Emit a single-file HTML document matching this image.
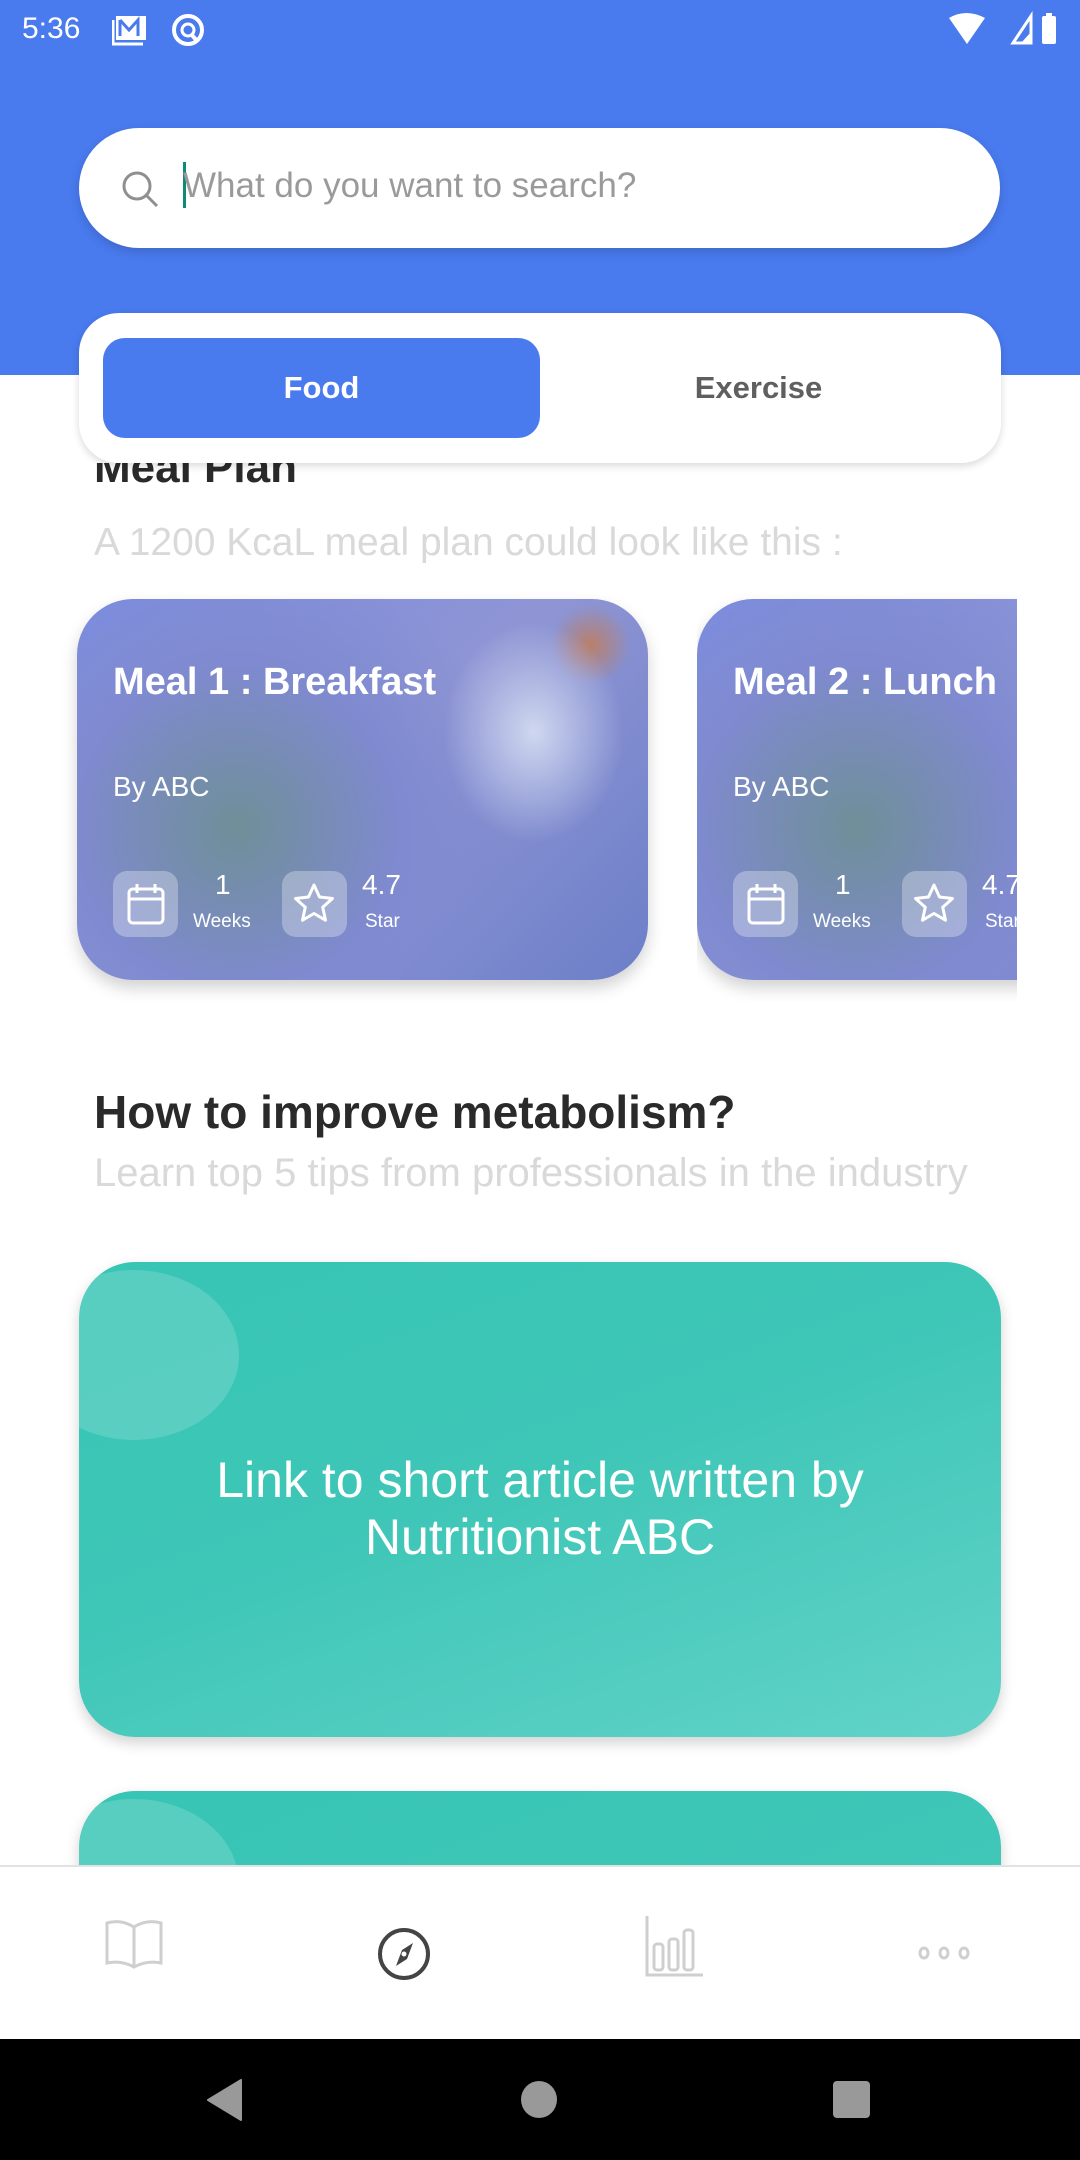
<!DOCTYPE html>
<html><head><meta charset="utf-8"><style>
*{margin:0;padding:0;box-sizing:border-box}
body{width:1080px;height:2160px;position:relative;overflow:hidden;background:#fff;font-family:"Liberation Sans",Roboto,sans-serif}
.abs{position:absolute}
.hdr{left:0;top:0;width:1080px;height:375px;background:#497AEE}
.status{color:#fff;font-size:30px;top:12px;left:22px}
.search{left:79px;top:128px;width:921px;height:120px;border-radius:60px;background:#fff;box-shadow:0 4px 10px rgba(0,0,0,.15)}
.search span{position:absolute;left:104px;top:38px;font-size:35px;color:#9a9a9a}
.caret{position:absolute;left:104px;top:34px;width:3px;height:46px;background:#0f8a78}
.tabs{left:79px;top:313px;width:922px;height:150px;border-radius:40px;background:#fff;box-shadow:0 3px 8px rgba(0,0,0,.15);z-index:3}
.food{position:absolute;left:24px;top:25px;width:437px;height:100px;border-radius:22px;background:#497AEE;color:#fff;font-weight:bold;font-size:31px;text-align:center;line-height:100px}
.ex{position:absolute;left:461px;top:25px;width:437px;height:100px;color:#5f5f5f;font-weight:bold;font-size:31px;text-align:center;line-height:100px}
.clip{left:0;top:463px;width:1080px;height:1402px;overflow:hidden}
.card{border-radius:56px;overflow:hidden;box-shadow:0 8px 16px rgba(0,0,0,.18);
background:
radial-gradient(ellipse 90px 110px at 80% 35%,rgba(220,228,245,.85),rgba(220,228,245,0) 100%),
radial-gradient(circle 40px at 90% 12%,#b9806a,rgba(0,0,0,0)),
radial-gradient(circle at 28% 60%,#6f8f98 0,#7f8ad0 35%,rgba(140,150,230,0) 60%),
linear-gradient(135deg,#7a8ce0,#8f95d4 50%,#6c7fc8);}
.ct{position:absolute;left:36px;color:#fff}
.ib{position:absolute;top:272px;width:65px;height:66px;border-radius:14px;background:rgba(255,255,255,.3)}
.teal{border-radius:56px;background:linear-gradient(160deg,#37C5B5 0%,#3EC6B7 45%,#62D3C8 100%);box-shadow:0 6px 14px rgba(0,0,0,.18);overflow:hidden}
.teal:before{content:"";position:absolute;left:-50px;top:8px;width:210px;height:170px;border-radius:50%;background:rgba(255,255,255,.16)}
.nav{left:0;top:1865px;width:1080px;height:174px;background:#fff;border-top:2px solid #e2e2e2}
.sys{left:0;top:2039px;width:1080px;height:121px;background:#000}
</style></head><body>
<div class="abs hdr"></div>
<div class="abs status">5:36</div>
<svg class="abs" style="left:112px;top:12px" width="100" height="36" viewBox="0 0 100 36">
<rect x="4" y="4" width="30" height="24" fill="#fff"/><path d="M8 8v16M8 8l9 10 9-10v16" stroke="#497AEE" stroke-width="3" fill="none"/>
<path d="M1 8v24h30" stroke="#fff" stroke-width="3" fill="none"/>
<circle cx="76" cy="18" r="14" fill="none" stroke="#fff" stroke-width="4"/><circle cx="76" cy="18" r="6" fill="none" stroke="#fff" stroke-width="3"/><path d="M79 22l7 8" stroke="#fff" stroke-width="4"/>
</svg>
<svg class="abs" style="left:945px;top:10px" width="120" height="36" viewBox="0 0 120 36">
<path d="M4 8q17-10 36 0l-18 26z" fill="#fff"/>
<path d="M68 33h18V6z" fill="none" stroke="#fff" stroke-width="3"/><path d="M76 33h10V22z" fill="#fff"/>
<rect x="97" y="6" width="14" height="28" rx="2" fill="#fff"/><rect x="101" y="3" width="6" height="4" fill="#fff"/>
</svg>
<div class="abs search">
<svg style="position:absolute;left:42px;top:42px" width="40" height="40" viewBox="0 0 40 40"><circle cx="16" cy="16" r="13" stroke="#8f8f8f" stroke-width="3" fill="none"/><path d="M26 26l10 10" stroke="#8f8f8f" stroke-width="3"/></svg>
<div class="caret"></div><span>What do you want to search?</span></div>
<div class="abs tabs"><div class="food">Food</div><div class="ex">Exercise</div></div>

<div class="abs clip">
<div class="abs" style="left:94px;top:-20px;font-size:44px;font-weight:bold;color:#2a2a2a">Meal Plan</div>
<div class="abs" style="left:94px;top:58px;font-size:39px;color:#d9d9d9">A 1200 KcaL meal plan could look like this :</div>

<div class="abs card" style="left:77px;top:136px;width:571px;height:381px">
<div class="ct" style="top:62px;font-size:38px;font-weight:bold">Meal 1 : Breakfast</div>
<div class="ct" style="top:172px;font-size:28px">By ABC</div>
<div class="ib" style="left:36px"><svg width="65" height="66" viewBox="0 0 65 66"><rect x="16" y="18" width="34" height="34" rx="4" fill="none" stroke="#fff" stroke-width="3"/><path d="M16 28h34M24 13v9M42 13v9" stroke="#fff" stroke-width="3"/></svg></div>
<div class="ct" style="left:138px;top:270px;font-size:28px">1</div>
<div class="ct" style="left:116px;top:312px;font-size:19px">Weeks</div>
<div class="ib" style="left:205px"><svg width="65" height="66" viewBox="0 0 65 66"><path d="M32 14l5.5 12 13 1.5-9.8 8.7 2.8 13L32 42.5l-11.5 6.7 2.8-13-9.8-8.7 13-1.5z" fill="none" stroke="#fff" stroke-width="3" stroke-linejoin="round"/></svg></div>
<div class="ct" style="left:285px;top:270px;font-size:28px">4.7</div>
<div class="ct" style="left:288px;top:312px;font-size:19px">Star</div>
</div>
<div class="abs" style="left:697px;top:120px;width:320px;height:420px;overflow:hidden">
<div class="abs card" style="left:0;top:16px;width:571px;height:381px">
<div class="ct" style="top:62px;font-size:38px;font-weight:bold">Meal 2 : Lunch</div>
<div class="ct" style="top:172px;font-size:28px">By ABC</div>
<div class="ib" style="left:36px"><svg width="65" height="66" viewBox="0 0 65 66"><rect x="16" y="18" width="34" height="34" rx="4" fill="none" stroke="#fff" stroke-width="3"/><path d="M16 28h34M24 13v9M42 13v9" stroke="#fff" stroke-width="3"/></svg></div>
<div class="ct" style="left:138px;top:270px;font-size:28px">1</div>
<div class="ct" style="left:116px;top:312px;font-size:19px">Weeks</div>
<div class="ib" style="left:205px"><svg width="65" height="66" viewBox="0 0 65 66"><path d="M32 14l5.5 12 13 1.5-9.8 8.7 2.8 13L32 42.5l-11.5 6.7 2.8-13-9.8-8.7 13-1.5z" fill="none" stroke="#fff" stroke-width="3" stroke-linejoin="round"/></svg></div>
<div class="ct" style="left:285px;top:270px;font-size:28px">4.7</div>
<div class="ct" style="left:288px;top:312px;font-size:19px">Star</div>
</div></div>

<div class="abs" style="left:94px;top:622px;font-size:46px;font-weight:bold;color:#2a2a2a">How to improve metabolism?</div>
<div class="abs" style="left:94px;top:688px;font-size:40px;color:#d9d9d9">Learn top 5 tips from professionals in the industry</div>

<div class="abs teal" style="left:79px;top:799px;width:922px;height:475px">
<div style="position:absolute;left:0;top:190px;width:922px;text-align:center;color:#fff;font-size:50px;line-height:57px">Link to short article written by<br>Nutritionist ABC</div>
</div>
<div class="abs teal" style="left:79px;top:1328px;width:922px;height:475px"></div>
</div>

<div class="abs nav">
<svg class="abs" style="left:103px;top:50px" width="62" height="60" viewBox="0 0 62 60"><path d="M4 6q14-4 27 4q13-8 27-4v40q-14-3-27 4q-13-7-27-4z M31 10v40" fill="none" stroke="#cfcfcf" stroke-width="3"/></svg>
<svg class="abs" style="left:376px;top:59px" width="56" height="56" viewBox="0 0 56 56"><circle cx="28" cy="28" r="24" fill="none" stroke="#444" stroke-width="4"/><path d="M37 17l-6 16-11 7 6-16z" fill="#444"/><circle cx="28" cy="28" r="2.5" fill="#fff"/></svg>
<svg class="abs" style="left:644px;top:47px" width="62" height="64" viewBox="0 0 62 64"><path d="M3 2v59h56" fill="none" stroke="#cfcfcf" stroke-width="3"/><rect x="10" y="30" width="9" height="26" rx="3" fill="none" stroke="#cfcfcf" stroke-width="3"/><rect x="25" y="25" width="9" height="31" rx="3" fill="none" stroke="#cfcfcf" stroke-width="3"/><rect x="40" y="16" width="9" height="40" rx="3" fill="none" stroke="#cfcfcf" stroke-width="3"/></svg>
<svg class="abs" style="left:916px;top:76px" width="56" height="20" viewBox="0 0 56 20"><g fill="none" stroke="#cfcfcf" stroke-width="3"><ellipse cx="8" cy="10" rx="4" ry="5"/><ellipse cx="28" cy="10" rx="4" ry="5"/><ellipse cx="48" cy="10" rx="4" ry="5"/></g></svg>
</div>
<div class="abs sys">
<svg class="abs" style="left:205px;top:40px" width="40" height="42" viewBox="0 0 40 42"><path d="M36 1v40L3 21z" fill="#999" stroke="#999" stroke-linejoin="round" stroke-width="2"/></svg>
<div class="abs" style="left:521px;top:42px;width:36px;height:37px;border-radius:50%;background:#999"></div>
<div class="abs" style="left:833px;top:42px;width:37px;height:37px;border-radius:4px;background:#999"></div>
</div>
</body></html>
